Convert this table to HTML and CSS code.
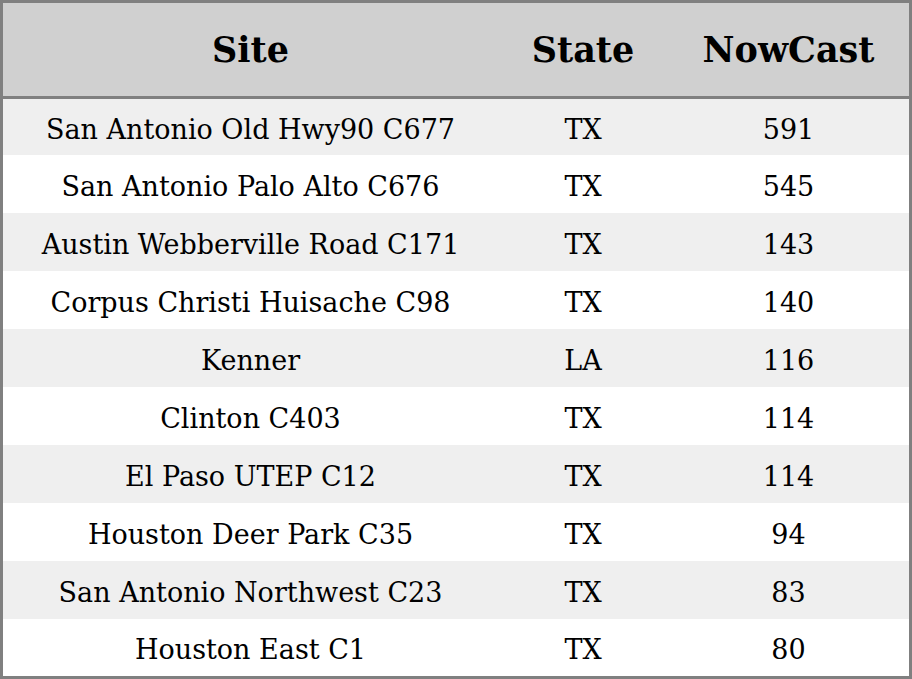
FILE: index.html
```html
<!DOCTYPE html>
<html>
<head>
<meta charset="utf-8">
<link rel="stylesheet" href="styles.css">
</head>
<body>
<table class="aq">
<colgroup><col class="c-site"><col class="c-state"><col class="c-now"></colgroup>
<thead>
<tr><th>Site</th><th>State</th><th>NowCast</th></tr>
</thead>
<tbody>
<tr><td>San Antonio Old Hwy90 C677</td><td>TX</td><td>591</td></tr>
<tr><td>San Antonio Palo Alto C676</td><td>TX</td><td>545</td></tr>
<tr><td>Austin Webberville Road C171</td><td>TX</td><td>143</td></tr>
<tr><td>Corpus Christi Huisache C98</td><td>TX</td><td>140</td></tr>
<tr><td>Kenner</td><td>LA</td><td>116</td></tr>
<tr><td>Clinton C403</td><td>TX</td><td>114</td></tr>
<tr><td>El Paso UTEP C12</td><td>TX</td><td>114</td></tr>
<tr><td>Houston Deer Park C35</td><td>TX</td><td>94</td></tr>
<tr><td>San Antonio Northwest C23</td><td>TX</td><td>83</td></tr>
<tr><td>Houston East C1</td><td>TX</td><td>80</td></tr>
</tbody>
</table>
</body>
</html>
```
FILE: styles.css
```css
html, body {
  margin: 0;
  padding: 0;
  background: #ffffff;
}
.aq {
  width: 912px;
  border-collapse: separate;
  border-spacing: 0;
  table-layout: fixed;
  border: 3px solid #808080;
  font-family: "DejaVu Serif", serif;
  color: #000;
}
.c-site { width: 495px; }
.c-state { width: 170px; }
.c-now { width: 241px; }
.aq th {
  height: 93px;
  padding: 0;
  background: #d0d0d0;
  border-bottom: 3px solid #808080;
  font-size: 35px;
  font-weight: bold;
  text-align: center;
}
.aq td {
  height: 54px;
  padding: 4px 0 0;
  text-align: center;
  font-size: 27px;
}
.aq tbody tr:first-child td { height: 52px; }
.aq tbody tr:last-child td { height: 53px; }
.aq tbody tr:nth-child(odd) { background: #efefef; }
.aq tbody tr:nth-child(even) { background: #ffffff; }
```
